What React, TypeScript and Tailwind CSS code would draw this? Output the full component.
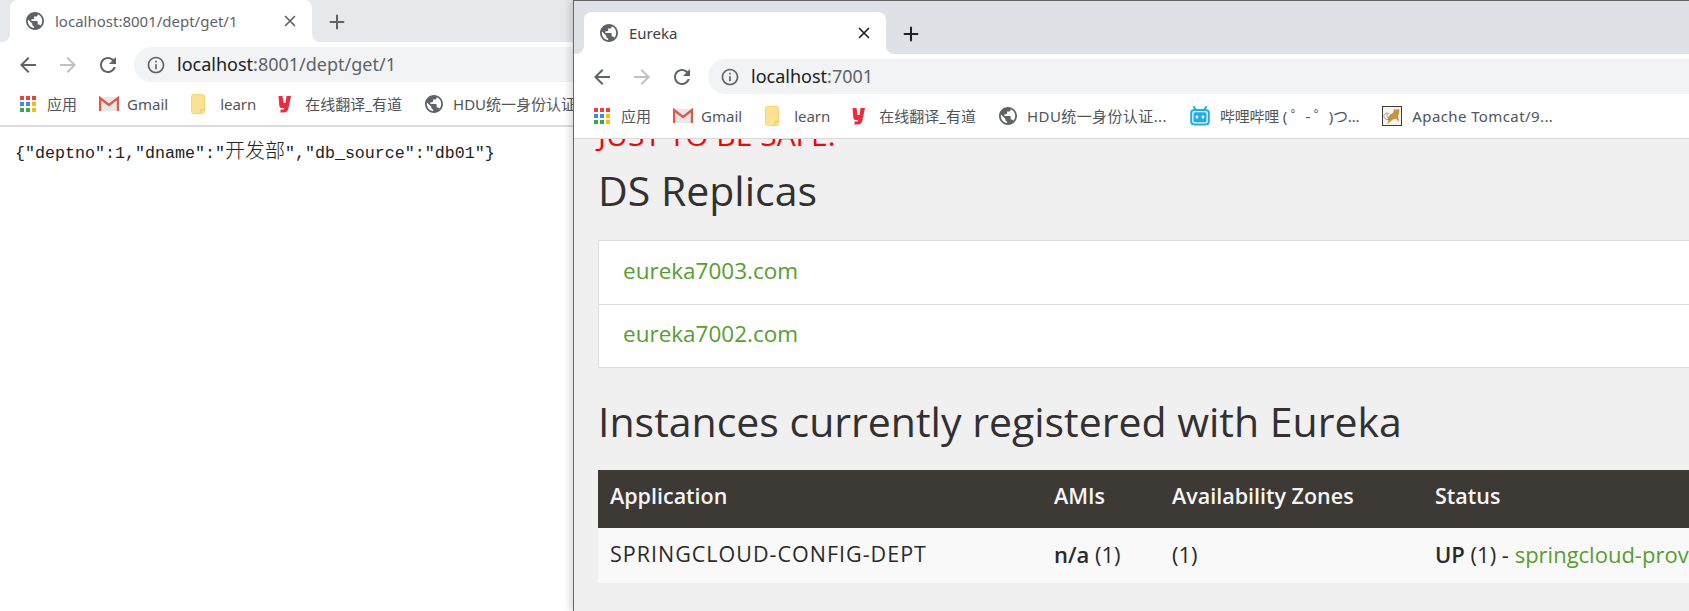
import React from "react";
import { Plus, X } from "lucide-react";

const uiFont = "font-['Noto_Sans','Noto_Sans_CJK_SC',sans-serif]";

function Globe({ className = "w-[18px] h-[18px]" }: { className?: string }) {
  return (
    <svg viewBox="2 2 20 20" className={`${className} shrink-0`} fill="#5f6368">
      <path d="M12 2C6.48 2 2 6.48 2 12s4.48 10 10 10 10-4.48 10-10S17.52 2 12 2zm-1 17.93c-3.95-.49-7-3.85-7-7.93 0-.62.08-1.21.21-1.79L9 15v1c0 1.1.9 2 2 2v1.93zm6.9-2.54c-.26-.81-1-1.39-1.9-1.39h-1v-3c0-.55-.45-1-1-1H8v-2h2c.55 0 1-.45 1-1V7h2c1.1 0 2-.9 2-2v-.41c2.93 1.19 5 4.06 5 7.41 0 2.08-.8 3.97-2.1 5.39z" />
    </svg>
  );
}

function NavIcon({ d, color = "#5f6368" }: { d: string; color?: string }) {
  return (
    <svg viewBox="0 0 24 24" className="w-6 h-6 shrink-0" fill={color}>
      <path d={d} />
    </svg>
  );
}

const backPath = "M20 11H7.83l5.59-5.59L12 4l-8 8 8 8 1.41-1.41L7.83 13H20v-2z";
const forwardPath = "M4 11h12.17l-5.59-5.59L12 4l8 8-8 8-1.41-1.41L16.17 13H4v-2z";
const reloadPath =
  "M17.65 6.35C16.2 4.9 14.21 4 12 4c-4.42 0-7.99 3.58-7.99 8s3.57 8 7.99 8c3.73 0 6.84-2.55 7.73-6h-2.08c-.82 2.33-3.04 4-5.65 4-3.31 0-6-2.69-6-6s2.69-6 6-6c1.66 0 3.14.69 4.22 1.78L13 11h7V4l-2.35 2.35z";
const infoPath =
  "M11 7h2v2h-2zm0 4h2v6h-2zm1-9C6.48 2 2 6.48 2 12s4.48 10 10 10 10-4.48 10-10S17.52 2 12 2zm0 18c-4.41 0-8-3.59-8-8s3.59-8 8-8 8 3.59 8 8-3.59 8-8 8z";

function AppsIcon() {
  const colors = ["#ea4335", "#ea4335", "#ea4335", "#4285f4", "#4285f4", "#fbbc04", "#34a853", "#34a853", "#fbbc04"];
  return (
    <div className="grid grid-cols-3 gap-[2px] w-4 h-4 shrink-0">
      {colors.map((c, i) => (
        <span key={i} className="w-[4px] h-[4px]" style={{ backgroundColor: c }} />
      ))}
    </div>
  );
}

function GmailIcon() {
  return (
    <svg viewBox="0 0 20 16" className="w-[20px] h-[16px] shrink-0">
      <rect x="1" y="1" width="18" height="14" fill="#e8e8e8" />
      <path d="M1 15V2l9 7 9-7v13" fill="none" stroke="#e2574c" strokeWidth="2.4" strokeLinejoin="miter" />
    </svg>
  );
}

function FolderIcon() {
  return (
    <svg viewBox="0 0 14 20" className="w-[14px] h-5 shrink-0">
      <rect x="0.5" y="0.5" width="13" height="19" rx="2" fill="#fde293" stroke="#f8d568" />
      <path d="M10 19.5v-4h3.5" fill="none" stroke="#f5c842" />
    </svg>
  );
}

function YoudaoIcon() {
  return (
    <svg viewBox="0 0 14 18" className="w-[15px] h-[18px] shrink-0">
      <path d="M1 1h4l1 7h2l1-7h4.500l-2.500 12c-.5 3-2 4.500-5 4.500H3v-3h2c1 0 1.500-.5 1.600-1.500H4C2.500 13 2 12 1.800 10.500z" fill="#ee2b3b" />
    </svg>
  );
}

function BiliIcon() {
  return (
    <svg viewBox="0 0 20 20" className="w-5 h-5 shrink-0">
      <path d="M6 4 4 1M14 4l2-3" stroke="#23ade5" strokeWidth="2" strokeLinecap="round" />
      <rect x="1.200" y="4" width="17.600" height="14.500" rx="3" fill="#e6f6fc" stroke="#23ade5" strokeWidth="2" />
      <rect x="3.500" y="6.300" width="13" height="10" rx="1.500" fill="#23ade5" />
      <rect x="5.800" y="9.500" width="2.400" height="3" rx="0.800" fill="#fff" />
      <rect x="11.800" y="9.500" width="2.400" height="3" rx="0.800" fill="#fff" />
    </svg>
  );
}

function TomcatIcon() {
  return (
    <svg viewBox="0 0 20 20" className="w-5 h-5 shrink-0">
      <rect x="0.500" y="0.500" width="19" height="19" fill="#f6f4ec" stroke="#3c3c3c" />
      <path d="M12.500 2.500l1.200 1.500 2.300-1 1.500 1-.5 3.500-1 2.500 1 6-3-3.500-3 1-6 4.500 2-5-3 1.500 4-6 3-1.500z" fill="#c9933c" />
      <path d="M2 9.500c1-2.500 3-3 4.500-2-1.500.5-2 1.500-1.500 3L7 13.500H4.500L2 11.500z" fill="#fff" stroke="#666" strokeWidth="0.600" />
    </svg>
  );
}

function Bookmark({ icon, label, gapClass = "gap-[10px]", textClass = "" }: { icon: React.ReactNode; label: string; gapClass?: string; textClass?: string }) {
  return (
    <div className={`flex items-center shrink-0 ${gapClass}`}>
      {icon}
      <span className={`text-[15px] leading-5 text-[#50555a] whitespace-nowrap ${textClass}`}>{label}</span>
    </div>
  );
}

function BrowserTab({ title, titleClass, closeClass, stripClass }: { title: string; titleClass: string; closeClass: string; stripClass: string }) {
  return (
    <div className="relative flex items-center w-[302px] h-[42px] bg-white rounded-t-lg pl-4 pr-[13px] shrink-0">
      <span className="absolute -left-2 bottom-0 w-2 h-2 bg-white">
        <span className={`block w-2 h-2 rounded-br-lg ${stripClass}`} />
      </span>
      <span className="absolute -right-2 bottom-0 w-2 h-2 bg-white">
        <span className={`block w-2 h-2 rounded-bl-lg ${stripClass}`} />
      </span>
      <Globe />
      <span className={`ml-[11px] flex-1 text-[15px] whitespace-nowrap ${titleClass}`}>{title}</span>
      <X className={`w-[18px] h-[18px] ${closeClass}`} strokeWidth={2.2} />
    </div>
  );
}

function Toolbar({ host, path }: { host: string; path: string }) {
  return (
    <div className="flex items-center h-[35px] pl-[16px]">
      <NavIcon d={backPath} />
      <div className="ml-[16px]">
        <NavIcon d={forwardPath} color="#bdc1c6" />
      </div>
      <div className="ml-[16px]">
        <NavIcon d={reloadPath} />
      </div>
      <div className="ml-[14px] flex items-center flex-1 h-[35px] rounded-l-full bg-[#f1f3f4] pl-[12px]">
        <svg viewBox="0 0 24 24" className="w-5 h-5 shrink-0" fill="#5f6368">
          <path d={infoPath} />
        </svg>
        <span className="ml-[11px] text-[18px] whitespace-nowrap text-[#5f6368]">
          <span className="text-[#202124]">{host}</span>
          {path}
        </span>
      </div>
    </div>
  );
}

function CommonBookmarks({ hduClass = "" }: { hduClass?: string }) {
  return (
    <>
      <Bookmark icon={<AppsIcon />} label="应用" gapClass="gap-[11px] -mr-[1px]" />
      <Bookmark icon={<GmailIcon />} label="Gmail" gapClass="gap-[8px]" />
      <Bookmark icon={<FolderIcon />} label="learn" gapClass="gap-[15px] -mr-[2px]" />
      <Bookmark icon={<YoudaoIcon />} label="在线翻译_有道" gapClass="gap-[13px]" />
      <Bookmark icon={<Globe />} label="HDU统一身份认证..." textClass={hduClass} />
    </>
  );
}

function LeftWindow() {
  return (
    <div className={`absolute left-0 top-0 w-[640px] h-[611px] flex flex-col bg-white ${uiFont}`}>
      <div className="flex items-end h-[42px] bg-[#e6e8eb] pl-[10px] shrink-0">
        <BrowserTab title="localhost:8001/dept/get/1" titleClass="text-[#5f6368]" closeClass="text-[#5f6368]" stripClass="bg-[#e6e8eb]" />
        <Plus className="ml-[14px] mb-[9px] w-[22px] h-[22px] text-[#5f6368]" strokeWidth={2.2} />
      </div>
      <div className="pt-[5px] shrink-0">
        <Toolbar host="localhost" path=":8001/dept/get/1" />
      </div>
      <div className="flex items-center gap-[23px] h-[45px] pl-[20px] border-b-2 border-[#dadce0] shrink-0">
        <CommonBookmarks />
      </div>
      <div className="pl-[15px] pt-[12px] text-[16.67px] leading-[22px] text-[#222] font-['Liberation_Mono',monospace] whitespace-nowrap">
        {'{"deptno":1,"dname":"'}
        <span className="text-[20px] font-['Noto_Sans_CJK_SC',sans-serif] font-light">开发部</span>
        {'","db_source":"db01"}'}
      </div>
    </div>
  );
}

function EurekaPage() {
  return (
    <div className="flex-1 overflow-hidden bg-[#f0f0f0] pl-6 font-['Open_Sans','Noto_Sans',sans-serif]">
      <div className="w-[1300px]">
        <div className="-mt-[20px] text-[30px] leading-[32px] font-medium text-[#ff0000] h-[20px]">JUST TO BE SAFE.</div>
        <h2 className="mt-[29px] text-[41px] leading-[44px] text-[#333030]">DS Replicas</h2>
        <ul className="mt-[28px] bg-white border border-[#ddd]">
          <li className="flex items-center h-[63px] pb-[4px] pl-[24px] text-[22.5px] text-[#569e2e]">eureka7003.com</li>
          <li className="flex items-center h-[63px] pb-[4px] pl-[24px] text-[22.5px] text-[#569e2e] border-t border-[#ddd]">eureka7002.com</li>
        </ul>
        <h2 className="mt-[31px] text-[41px] leading-[44px] text-[#333030]">Instances currently registered with Eureka</h2>
        <table className="mt-[27px] w-full table-fixed text-[22px] text-[#2c2a28]">
          <colgroup>
            <col className="w-[444px]" />
            <col className="w-[118px]" />
            <col className="w-[263px]" />
            <col />
          </colgroup>
          <thead className="bg-[#3d3935] text-[#f5f5f5] text-[21.5px]">
            <tr className="h-[58px] text-left">
              <th className="pl-3 pb-[5px] font-semibold">Application</th>
              <th className="pl-3 pb-[5px] font-semibold">AMIs</th>
              <th className="pl-3 pb-[5px] font-semibold">Availability Zones</th>
              <th className="pl-3 pb-[5px] font-semibold">Status</th>
            </tr>
          </thead>
          <tbody className="bg-[#f9f9f9]">
            <tr className="h-[55px]">
              <td className="pl-3 pb-[3px] font-medium tracking-[1px] text-[21.5px] whitespace-nowrap">SPRINGCLOUD-CONFIG-DEPT</td>
              <td className="pl-3 pb-[3px]">
                <b className="font-semibold">n/a</b> (1)
              </td>
              <td className="pl-3 pb-[3px]">(1)</td>
              <td className="pl-3 pb-[3px] whitespace-nowrap">
                <b className="font-semibold">UP</b> (1) - <span className="text-[#569e2e]">springcloud-provider-dept-7001</span>
              </td>
            </tr>
          </tbody>
        </table>
      </div>
    </div>
  );
}

function RightWindow() {
  return (
    <div className={`absolute left-[573px] top-0 right-0 h-[611px] flex flex-col border-l border-t border-[#666] bg-white shadow-[-4px_0_6px_rgba(0,0,0,0.12)] ${uiFont}`}>
      <div className="flex items-end h-[53px] bg-[#dee1e6] pl-[10px] shrink-0">
        <BrowserTab title="Eureka" titleClass="text-[#3c4043]" closeClass="text-[#202124]" stripClass="bg-[#dee1e6]" />
        <Plus className="ml-[14px] mb-[9px] w-[22px] h-[22px] text-[#202124]" strokeWidth={2.2} />
      </div>
      <div className="pt-[5px] shrink-0">
        <Toolbar host="localhost" path=":7001" />
      </div>
      <div className="flex items-center gap-[23px] h-[45px] pl-[20px] border-b border-[#d9d9d9] shrink-0">
        <CommonBookmarks hduClass="tracking-[0.4px]" />
        <Bookmark icon={<BiliIcon />} label="哔哩哔哩 ( ゜- ゜)つ..." textClass="tracking-[-0.2px]" />
        <Bookmark icon={<TomcatIcon />} label="Apache Tomcat/9..." textClass="tracking-[0.4px]" />
      </div>
      <EurekaPage />
    </div>
  );
}

export default function App() {
  return (
    <div className="relative w-[1689px] h-[611px] overflow-hidden bg-white">
      <LeftWindow />
      <RightWindow />
    </div>
  );
}
